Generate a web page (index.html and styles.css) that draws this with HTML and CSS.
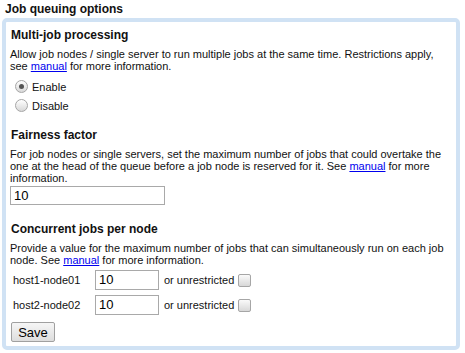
FILE: index.html
```html
<!DOCTYPE html>
<html>
<head>
<meta charset="utf-8">
<link rel="stylesheet" href="styles.css">
</head>
<body>
<h1 class="title">Job queuing options</h1>
<div class="panel">
  <div class="group">
    <h2 class="heading">Multi-job processing</h2>
    <p class="desc">Allow job nodes / single server to run multiple jobs at the same time. Restrictions apply, see <a href="#">manual</a> for more information.</p>
    <div class="radios">
      <label class="radio-row"><span class="radio checked"></span>Enable</label>
      <label class="radio-row"><span class="radio"></span>Disable</label>
    </div>
  </div>
  <div class="group">
    <h2 class="heading">Fairness factor</h2>
    <p class="desc">For job nodes or single servers, set the maximum number of jobs that could overtake the one at the head of the queue before a job node is reserved for it. See <a href="#">manual</a> for more information.</p>
    <div class="field wide">10</div>
  </div>
  <div class="group last">
    <h2 class="heading">Concurrent jobs per node</h2>
    <p class="desc">Provide a value for the maximum number of jobs that can simultaneously run on each job node. See <a href="#">manual</a> for more information.</p>
    <div class="nodes">
      <div class="node-row">
        <span class="node-name">host1-node01</span>
        <span class="field small">10</span>
        <span class="unres">or unrestricted</span>
        <span class="check"></span>
      </div>
      <div class="node-row">
        <span class="node-name">host2-node02</span>
        <span class="field small">10</span>
        <span class="unres">or unrestricted</span>
        <span class="check"></span>
      </div>
    </div>
  </div>
  <button class="save">Save</button>
</div>
</body>
</html>
```

FILE: styles.css
```css
html, body {
  margin: 0;
  padding: 0;
  background: #fff;
}
body {
  font-family: "Liberation Sans", Arial, sans-serif;
  color: #111;
  padding: 1px 5px 0 2px;
  font-size: 11px;
}
.title {
  font-size: 12px;
  font-weight: bold;
  margin: 0 0 0 3px;
  line-height: 16px;
  height: 17px;
}
.panel {
  border: 4px solid #d0e2f4;
  border-radius: 5px;
  padding: 5px 4px 4px 4px;
}
.heading {
  font-size: 12px;
  font-weight: bold;
  margin: 0 0 0 1px;
  line-height: 16px;
}
.desc {
  margin: 5px 0 0 0;
  line-height: 12px;
}
.desc a {
  color: #0000ee;
}
.group {
  margin-bottom: 12px;
}
.group.last {
  margin-bottom: 7px;
}
.group + .group.last {
  margin-top: 16px;
}
.group:nth-child(2) {
  margin-bottom: 0;
}
.radios {
  margin-top: 5px;
}
.radio-row {
  display: flex;
  align-items: center;
  height: 19px;
  margin-left: 5px;
  gap: 4px;
}
.radio {
  width: 11px;
  height: 11px;
  border: 1px solid #a6a6a6;
  border-radius: 50%;
  background: linear-gradient(#ffffff, #d8d8d8);
  position: relative;
}
.radio.checked::after {
  content: "";
  position: absolute;
  left: 3px;
  top: 3px;
  width: 5px;
  height: 5px;
  border-radius: 50%;
  background: #555;
}
.field {
  border: 1px solid #a9a9a9;
  box-sizing: border-box;
  font-size: 13px;
  line-height: 17px;
  padding: 0 3px;
  display: block;
  background: #fff;
  color: #000;
}
.field.wide {
  width: 155px;
  height: 19px;
  margin-top: 2px;
}
.nodes {
  margin-top: 4px;
  display: flex;
  flex-direction: column;
  gap: 5px;
}
.node-row {
  display: flex;
  align-items: center;
  height: 20px;
}
.node-name {
  width: 85px;
  padding-left: 3px;
  box-sizing: border-box;
  font-size: 11px;
}
.field.small {
  width: 64px;
  height: 20px;
  line-height: 18px;
}
.unres {
  margin-left: 5px;
  font-size: 11px;
}
.check {
  width: 11px;
  height: 11px;
  border: 1px solid #a6a6a6;
  border-radius: 2px;
  background: linear-gradient(#fafafa, #d8d8d8);
  margin-left: 4px;
}
.save {
  display: block;
  font-family: "Liberation Sans", Arial, sans-serif;
  font-size: 13px;
  width: 44px;
  height: 20px;
  padding: 0;
  border: 1px solid #a0a0a0;
  border-radius: 2px;
  background: linear-gradient(#f6f6f6, #dddddd);
  color: #000;
  margin-left: 1px;
}
```
